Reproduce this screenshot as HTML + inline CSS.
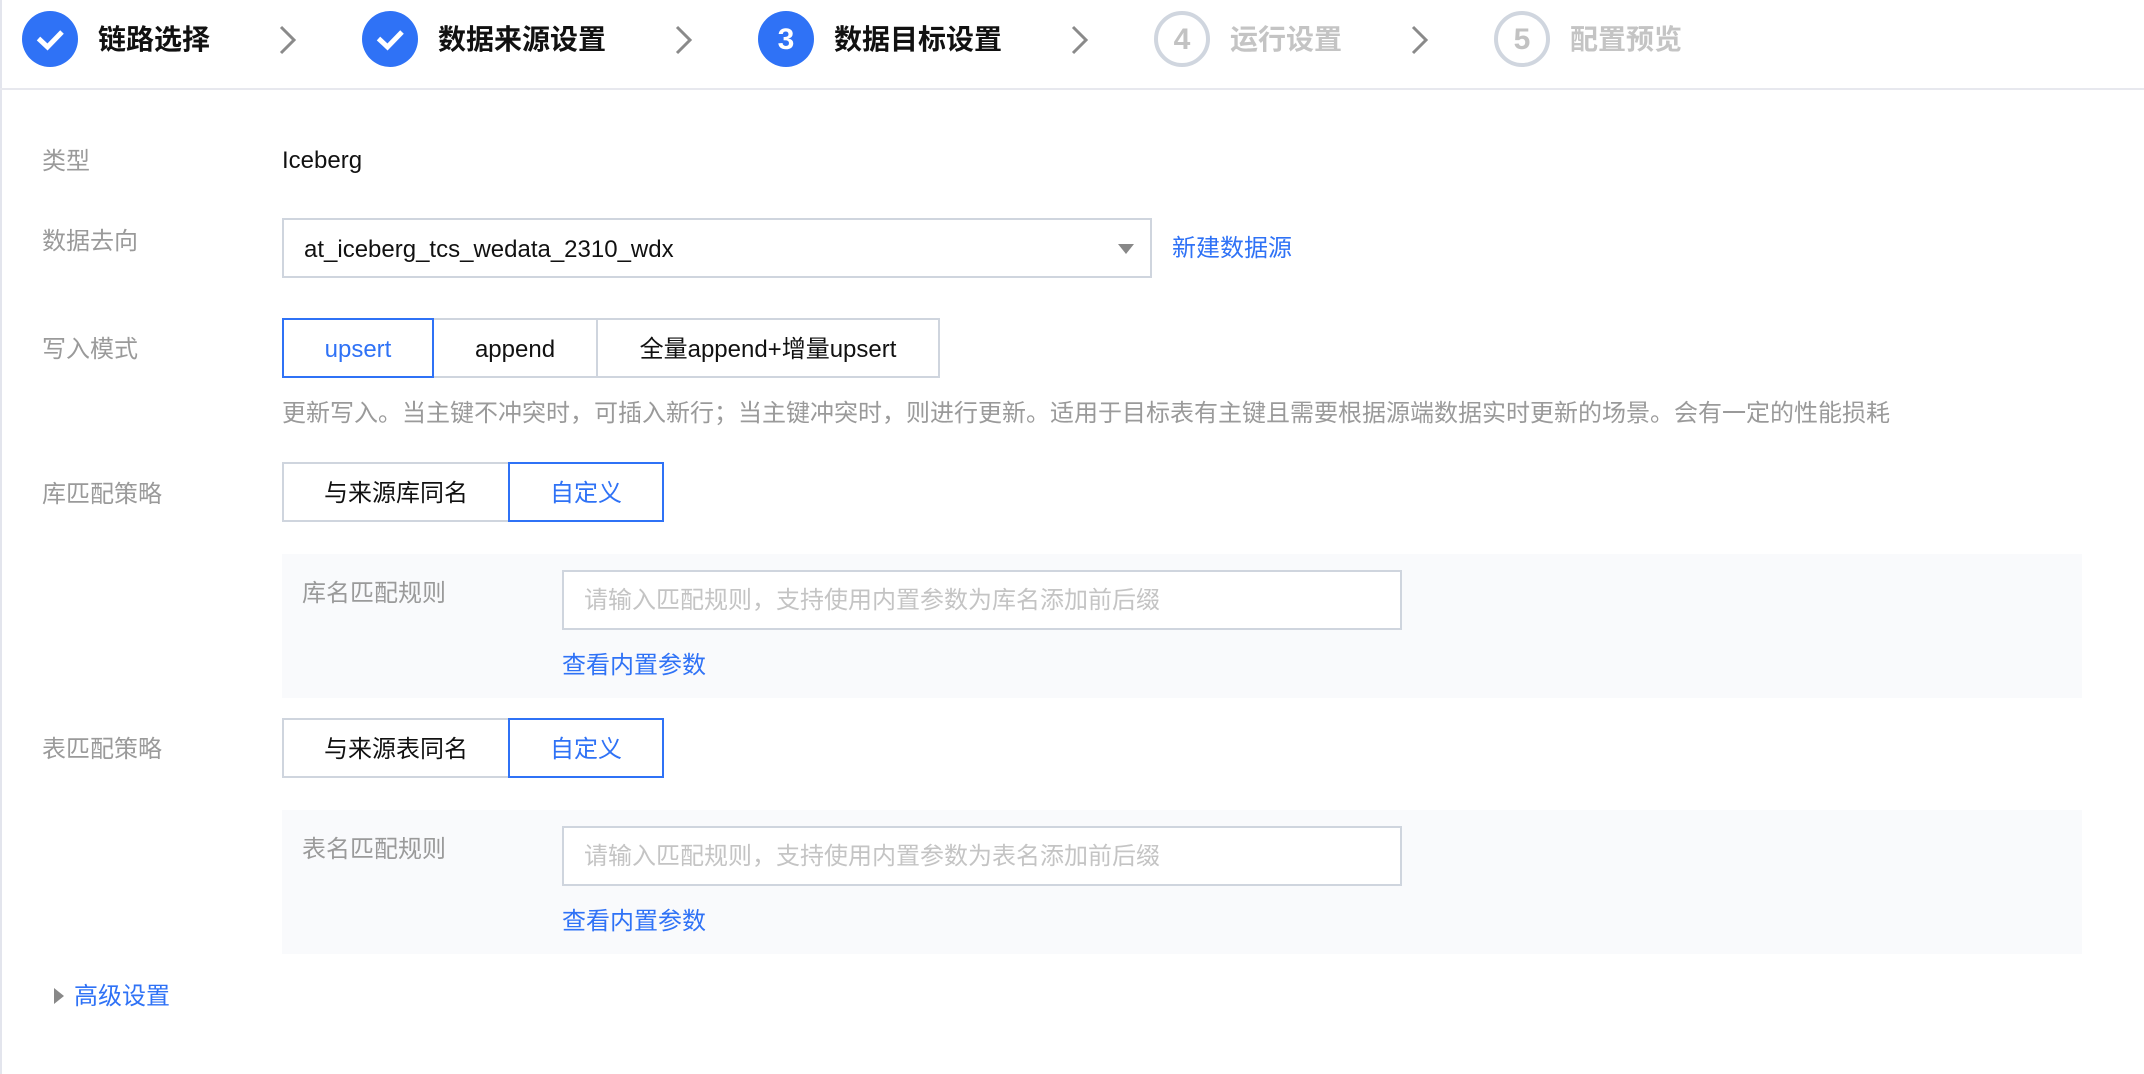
<!DOCTYPE html>
<html lang="zh-CN">
<head>
<meta charset="utf-8">
<title>数据目标设置</title>
<style>
html,body{margin:0;padding:0;background:#fff;}
body{width:2144px;height:1074px;position:relative;overflow:hidden;font-family:"Liberation Sans","Noto Sans CJK SC",sans-serif;font-size:24px;color:#111;}
.t{position:absolute;line-height:40px;height:40px;white-space:nowrap;}
.lb{color:#9a9a9a;}
.blue{color:#2f72f6;}
.h{font-size:28px;font-weight:700;color:#111;}
.hg{font-size:28px;font-weight:700;color:#c4c4c4;}
.box{position:absolute;box-sizing:border-box;border:2px solid #cfd5de;background:#fff;}
.act{border-color:#2f72f6;z-index:2;}
.btn{text-align:center;line-height:59px;white-space:nowrap;}
.panel{position:absolute;left:282px;width:1800px;background:#f9fafc;}
.ph{color:#c4c4c4;}
.c{position:absolute;top:11px;width:56px;height:56px;border-radius:50%;box-sizing:border-box;text-align:center;font-weight:700;font-size:30px;line-height:58px;}
.c.on{background:#2f72f6;color:#fff;}
.c.off{border:4px solid #d0d6df;color:#c2c2c2;line-height:50px;}
svg{position:absolute;display:block;}
</style>
</head>
<body>
<div style="position:absolute;left:0;top:0;width:2px;height:1074px;background:#e3e5ed;"></div>
<div style="position:absolute;left:0;top:88px;width:2144px;height:2px;background:#e7e8ee;"></div>

<div class="c on" style="left:22px;"><svg style="left:0;top:0" width="56" height="56" viewBox="0 0 56 56"><path d="M16.500 27.500L25.500 36L40 21" fill="none" stroke="#fff" stroke-width="5"/></svg></div>
<div class="t h" style="left:98px;top:20px;">链路选择</div>
<svg style="left:279px;top:25px" width="18" height="30" viewBox="0 0 18 30"><path d="M2 2L15 15L2 28" fill="none" stroke="#8a8a8a" stroke-width="3"/></svg>

<div class="c on" style="left:362px;"><svg style="left:0;top:0" width="56" height="56" viewBox="0 0 56 56"><path d="M16.500 27.500L25.500 36L40 21" fill="none" stroke="#fff" stroke-width="5"/></svg></div>
<div class="t h" style="left:438px;top:20px;">数据来源设置</div>
<svg style="left:675px;top:25px" width="18" height="30" viewBox="0 0 18 30"><path d="M2 2L15 15L2 28" fill="none" stroke="#8a8a8a" stroke-width="3"/></svg>

<div class="c on" style="left:758px;">3</div>
<div class="t h" style="left:834px;top:20px;">数据目标设置</div>
<svg style="left:1071px;top:25px" width="18" height="30" viewBox="0 0 18 30"><path d="M2 2L15 15L2 28" fill="none" stroke="#8a8a8a" stroke-width="3"/></svg>

<div class="c off" style="left:1154px;">4</div>
<div class="t hg" style="left:1230px;top:20px;">运行设置</div>
<svg style="left:1411px;top:25px" width="18" height="30" viewBox="0 0 18 30"><path d="M2 2L15 15L2 28" fill="none" stroke="#8a8a8a" stroke-width="3"/></svg>

<div class="c off" style="left:1494px;">5</div>
<div class="t hg" style="left:1570px;top:20px;">配置预览</div>

<div class="t lb" style="left:42px;top:142px;">类型</div>
<div class="t" style="left:282px;top:141px;">Iceberg</div>

<div class="t lb" style="left:42px;top:222px;">数据去向</div>
<div class="box" style="left:282px;top:218px;width:870px;height:60px;"></div>
<div class="t" style="left:304px;top:230px;">at_iceberg_tcs_wedata_2310_wdx</div>
<svg style="left:1118px;top:244px" width="16" height="10" viewBox="0 0 16 10"><path d="M0 0H16L8 10Z" fill="#888"/></svg>
<div class="t blue" style="left:1172px;top:229px;">新建数据源</div>

<div class="t lb" style="left:42px;top:330px;">写入模式</div>
<div class="box btn act" style="left:282px;top:318px;width:152px;height:60px;color:#2f72f6;">upsert</div>
<div class="box btn" style="left:432px;top:318px;width:166px;height:60px;">append</div>
<div class="box btn" style="left:596px;top:318px;width:344px;height:60px;">全量append+增量upsert</div>
<div class="t lb" style="left:282px;top:394px;">更新写入。当主键不冲突时，可插入新行；当主键冲突时，则进行更新。适用于目标表有主键且需要根据源端数据实时更新的场景。会有一定的性能损耗</div>

<div class="t lb" style="left:42px;top:475px;">库匹配策略</div>
<div class="box btn" style="left:282px;top:462px;width:228px;height:60px;">与来源库同名</div>
<div class="box btn act" style="left:508px;top:462px;width:156px;height:60px;color:#2f72f6;">自定义</div>

<div class="panel" style="top:554px;height:144px;"></div>
<div class="t lb" style="left:302px;top:574px;">库名匹配规则</div>
<div class="box" style="left:562px;top:570px;width:840px;height:60px;"></div>
<div class="t ph" style="left:584px;top:581px;">请输入匹配规则，支持使用内置参数为库名添加前后缀</div>
<div class="t blue" style="left:562px;top:646px;">查看内置参数</div>

<div class="t lb" style="left:42px;top:730px;">表匹配策略</div>
<div class="box btn" style="left:282px;top:718px;width:228px;height:60px;">与来源表同名</div>
<div class="box btn act" style="left:508px;top:718px;width:156px;height:60px;color:#2f72f6;">自定义</div>

<div class="panel" style="top:810px;height:144px;"></div>
<div class="t lb" style="left:302px;top:830px;">表名匹配规则</div>
<div class="box" style="left:562px;top:826px;width:840px;height:60px;"></div>
<div class="t ph" style="left:584px;top:837px;">请输入匹配规则，支持使用内置参数为表名添加前后缀</div>
<div class="t blue" style="left:562px;top:902px;">查看内置参数</div>

<svg style="left:54px;top:988px" width="10" height="16" viewBox="0 0 10 16"><path d="M0 0L10 8L0 16Z" fill="#888"/></svg>
<div class="t blue" style="left:74px;top:977px;">高级设置</div>
</body>
</html>
